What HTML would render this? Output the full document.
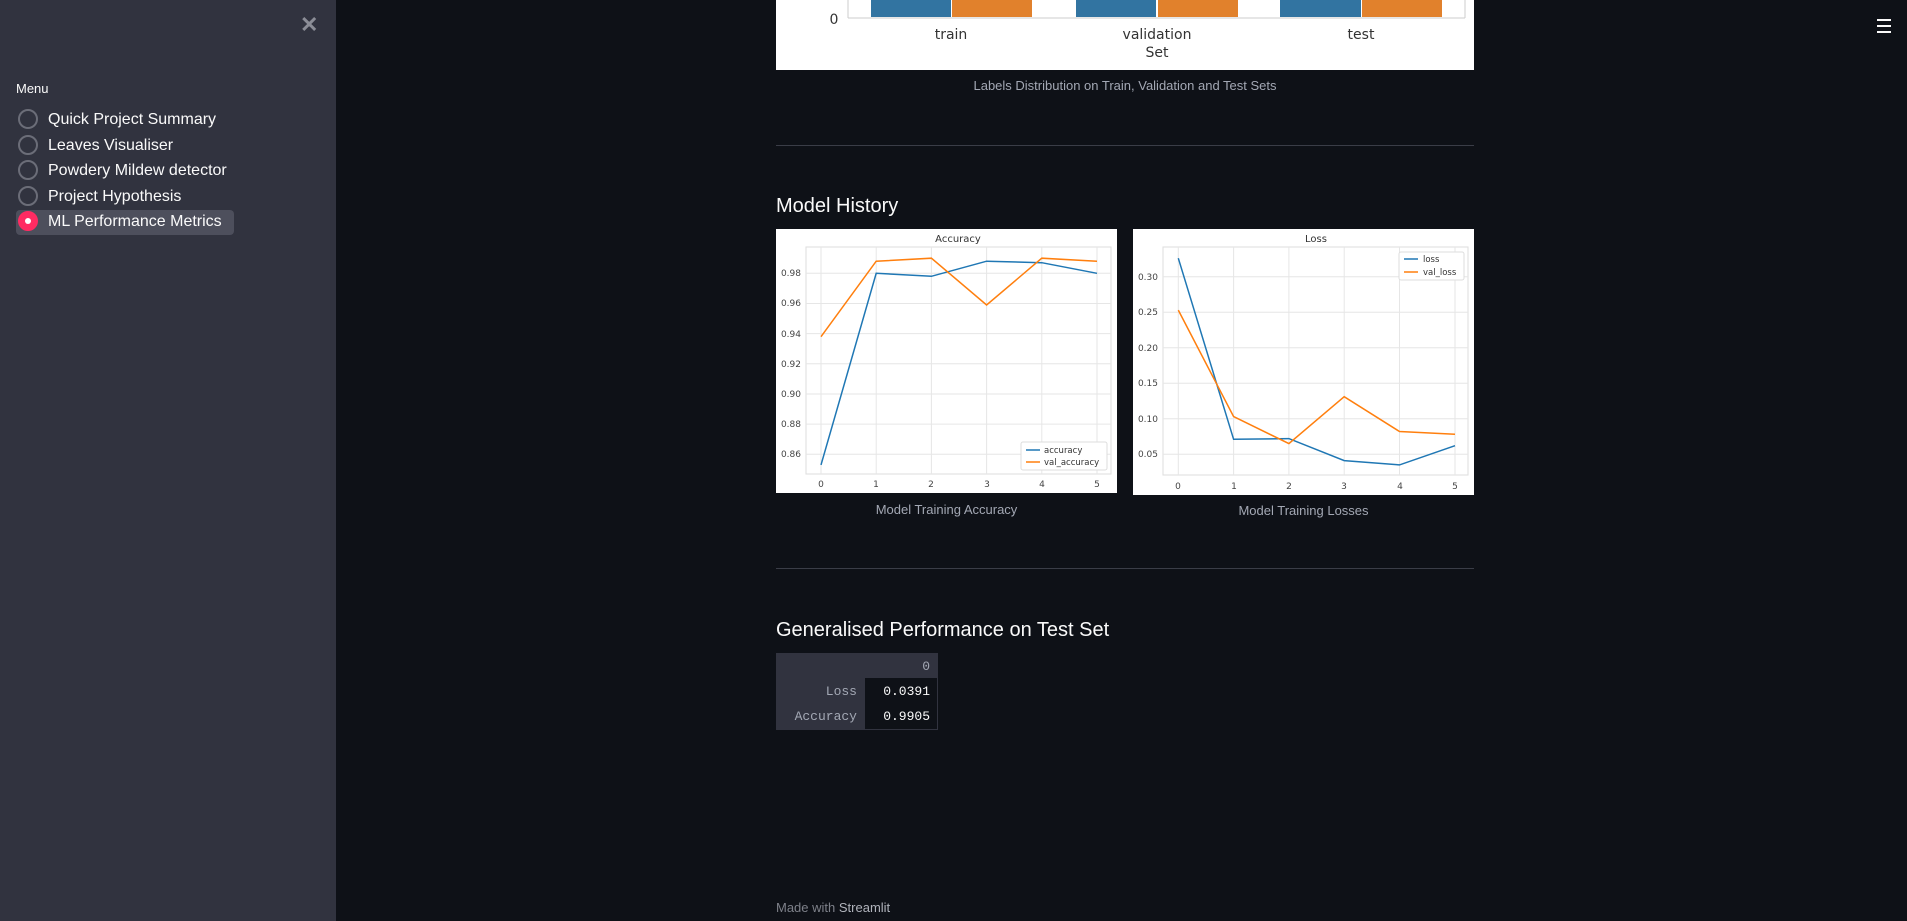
<!DOCTYPE html>
<html><head><meta charset="utf-8"><style>
*{margin:0;padding:0;box-sizing:border-box}
body{width:1907px;height:921px;background:#0e1117;font-family:"Liberation Sans",sans-serif;position:relative;overflow:hidden;color:#fafafa}
.sb{position:absolute;left:0;top:0;width:336px;height:921px;background:#31333f}
.abs{position:absolute;white-space:nowrap}
.radio{position:absolute;left:18px;width:20px;height:20px;border:2px solid #6b6d78;border-radius:50%}
.item{position:absolute;left:48px;font-size:16px;color:#fafafa}
.cap{position:absolute;font-size:13px;color:#a3a8b4;text-align:center}
.hr{position:absolute;left:776px;width:698px;height:1px;background:#3a3d47}
h3{position:absolute;font-weight:normal;font-size:20px;color:#fafafa;left:776px;white-space:nowrap}
.mono{font-family:"Liberation Mono",monospace;font-size:13px}
</style></head><body>
<div class="sb">
  <div class="abs" style="left:300px;top:12px;font-size:22px;color:#8b8d96;font-weight:bold">✕</div>
  <div class="abs" style="left:16px;top:81px;font-size:13px;color:#fafafa">Menu</div>
  <div class="abs" style="left:16px;top:210px;width:218px;height:25px;background:#4d4f5c;border-radius:4px"></div>
  <div class="radio" style="top:109px"></div><div class="item" style="top:111px">Quick Project Summary</div>
  <div class="radio" style="top:135px"></div><div class="item" style="top:137px">Leaves Visualiser</div>
  <div class="radio" style="top:160px"></div><div class="item" style="top:162px">Powdery Mildew detector</div>
  <div class="radio" style="top:186px"></div><div class="item" style="top:188px">Project Hypothesis</div>
  <div class="radio" style="top:211px;background:#ff2b62;border-color:#ff2b62"><div style="position:absolute;left:5px;top:5px;width:6px;height:6px;background:#fff;border-radius:50%"></div></div>
  <div class="item" style="top:213px">ML Performance Metrics</div>
</div>
<div class="abs" style="left:1877px;top:19px;width:14px;height:2px;background:#fafafa"></div>
<div class="abs" style="left:1877px;top:25px;width:14px;height:2px;background:#fafafa"></div>
<div class="abs" style="left:1877px;top:31px;width:14px;height:2px;background:#fafafa"></div>

<svg class="abs" style="left:776px;top:0" width="698" height="70">
<rect width="698" height="70" fill="#fff"/>
<rect x="95" y="0" width="80" height="17" fill="#3274a1"/><rect x="176" y="0" width="80" height="17" fill="#e1812c"/>
<rect x="300" y="0" width="80" height="17" fill="#3274a1"/><rect x="382" y="0" width="80" height="17" fill="#e1812c"/>
<rect x="504" y="0" width="81" height="17" fill="#3274a1"/><rect x="586" y="0" width="80" height="17" fill="#e1812c"/>
<line x1="72" y1="0" x2="72" y2="18" stroke="#ccc"/><line x1="689" y1="0" x2="689" y2="18" stroke="#ccc"/>
<line x1="72" y1="18" x2="689" y2="18" stroke="#ccc"/>
<g font-family="DejaVu Sans,sans-serif" font-size="14" fill="#333" text-anchor="middle">
<text x="58" y="24">0</text><text x="175" y="39">train</text><text x="381" y="39">validation</text><text x="585" y="39">test</text><text x="381" y="57">Set</text></g>
</svg>
<div class="cap" style="left:776px;width:698px;top:78px">Labels Distribution on Train, Validation and Test Sets</div>
<div class="hr" style="top:145px"></div>
<h3 style="top:195px">Model History</h3>

<svg class="abs" style="left:776px;top:229px" width="341" height="264" font-family="DejaVu Sans,sans-serif">
<rect width="341" height="264" fill="#fff"/>
<rect x="30" y="18" width="305" height="227" fill="none" stroke="#ddd"/>
<g stroke="#e6e6e6">
<line x1="30" x2="335" y1="225.3" y2="225.3"/><line x1="30" x2="335" y1="195.1" y2="195.1"/><line x1="30" x2="335" y1="165" y2="165"/><line x1="30" x2="335" y1="134.8" y2="134.8"/><line x1="30" x2="335" y1="104.6" y2="104.6"/><line x1="30" x2="335" y1="74.5" y2="74.5"/><line x1="30" x2="335" y1="44.3" y2="44.3"/>
<line y1="18" y2="245" x1="45" x2="45"/><line y1="18" y2="245" x1="100.2" x2="100.2"/><line y1="18" y2="245" x1="155.4" x2="155.4"/><line y1="18" y2="245" x1="210.6" x2="210.6"/><line y1="18" y2="245" x1="265.8" x2="265.8"/><line y1="18" y2="245" x1="321" x2="321"/></g>
<g font-size="9" fill="#444" text-anchor="end">
<text x="25" y="228">0.86</text><text x="25" y="198">0.88</text><text x="25" y="168">0.90</text><text x="25" y="138">0.92</text><text x="25" y="108">0.94</text><text x="25" y="77">0.96</text><text x="25" y="47">0.98</text></g>
<g font-size="9" fill="#444" text-anchor="middle">
<text x="45" y="258">0</text><text x="100" y="258">1</text><text x="155" y="258">2</text><text x="211" y="258">3</text><text x="266" y="258">4</text><text x="321" y="258">5</text>
<text x="182" y="13" font-size="10" fill="#333">Accuracy</text></g>
<polyline fill="none" stroke="#1f77b4" stroke-width="1.5" points="45,235.9 100.2,44.3 155.4,47.3 210.6,32.2 265.8,33.7 321,44.3"/>
<polyline fill="none" stroke="#ff7f0e" stroke-width="1.5" points="45,107.7 100.2,32.2 155.4,29.2 210.6,76 265.8,29.2 321,32.2"/>
<rect x="245" y="213" width="86" height="28" fill="#fff" stroke="#ddd" rx="2"/>
<line x1="250" x2="264" y1="221" y2="221" stroke="#1f77b4" stroke-width="1.5"/><line x1="250" x2="264" y1="233" y2="233" stroke="#ff7f0e" stroke-width="1.5"/>
<text x="268" y="224" font-size="8.5" fill="#333">accuracy</text><text x="268" y="236" font-size="8.5" fill="#333">val_accuracy</text>
</svg>

<svg class="abs" style="left:1133px;top:229px" width="341" height="266" font-family="DejaVu Sans,sans-serif">
<rect width="341" height="266" fill="#fff"/>
<rect x="30" y="18" width="305" height="228" fill="none" stroke="#ddd"/>
<g stroke="#e6e6e6">
<line x1="30" x2="335" y1="47.7" y2="47.7"/><line x1="30" x2="335" y1="83.2" y2="83.2"/><line x1="30" x2="335" y1="118.7" y2="118.7"/><line x1="30" x2="335" y1="154.2" y2="154.2"/><line x1="30" x2="335" y1="189.7" y2="189.7"/><line x1="30" x2="335" y1="225.2" y2="225.2"/>
<line y1="18" y2="246" x1="45.3" x2="45.3"/><line y1="18" y2="246" x1="100.6" x2="100.6"/><line y1="18" y2="246" x1="155.9" x2="155.9"/><line y1="18" y2="246" x1="211.2" x2="211.2"/><line y1="18" y2="246" x1="266.5" x2="266.5"/><line y1="18" y2="246" x1="322" x2="322"/></g>
<g font-size="9" fill="#444" text-anchor="end">
<text x="25" y="51">0.30</text><text x="25" y="86">0.25</text><text x="25" y="122">0.20</text><text x="25" y="157">0.15</text><text x="25" y="193">0.10</text><text x="25" y="228">0.05</text></g>
<g font-size="9" fill="#444" text-anchor="middle">
<text x="45" y="260">0</text><text x="101" y="260">1</text><text x="156" y="260">2</text><text x="211" y="260">3</text><text x="267" y="260">4</text><text x="322" y="260">5</text>
<text x="183" y="13" font-size="10" fill="#333">Loss</text></g>
<polyline fill="none" stroke="#1f77b4" stroke-width="1.5" points="45.3,29.2 100.6,210.3 155.9,209.6 211.2,231.6 266.5,235.9 322,216.7"/>
<polyline fill="none" stroke="#ff7f0e" stroke-width="1.5" points="45.3,81.1 100.6,187.6 155.9,214.6 211.2,167.7 266.5,202.5 322,205.3"/>
<rect x="266" y="23" width="65" height="28" fill="#fff" stroke="#ddd" rx="2"/>
<line x1="271" x2="285" y1="30" y2="30" stroke="#1f77b4" stroke-width="1.5"/><line x1="271" x2="285" y1="43" y2="43" stroke="#ff7f0e" stroke-width="1.5"/>
<text x="290" y="33" font-size="8.5" fill="#333">loss</text><text x="290" y="46" font-size="8.5" fill="#333">val_loss</text>
</svg>
<div class="cap" style="left:776px;width:341px;top:502px">Model Training Accuracy</div>
<div class="cap" style="left:1133px;width:341px;top:503px">Model Training Losses</div>
<div class="hr" style="top:568px"></div>
<h3 style="top:619px">Generalised Performance on Test Set</h3>

<div class="abs" style="left:776px;top:653px;width:162px;height:77px;background:#31333f"></div>
<div class="abs" style="left:865px;top:678px;width:72px;height:51px;background:#0e1117"></div>
<div class="abs mono" style="left:776px;top:659px;width:154px;text-align:right;color:#a3a8b4">0</div>
<div class="abs mono" style="left:776px;top:684px;width:81px;text-align:right;color:#a3a8b4">Loss</div>
<div class="abs mono" style="left:776px;top:709px;width:81px;text-align:right;color:#a3a8b4">Accuracy</div>
<div class="abs mono" style="left:865px;top:684px;width:65px;text-align:right">0.0391</div>
<div class="abs mono" style="left:865px;top:709px;width:65px;text-align:right">0.9905</div>

<div class="abs" style="left:776px;top:900px;font-size:13px;color:#7d8089">Made with <span style="color:#b0b3bb">Streamlit</span></div>
</body></html>
